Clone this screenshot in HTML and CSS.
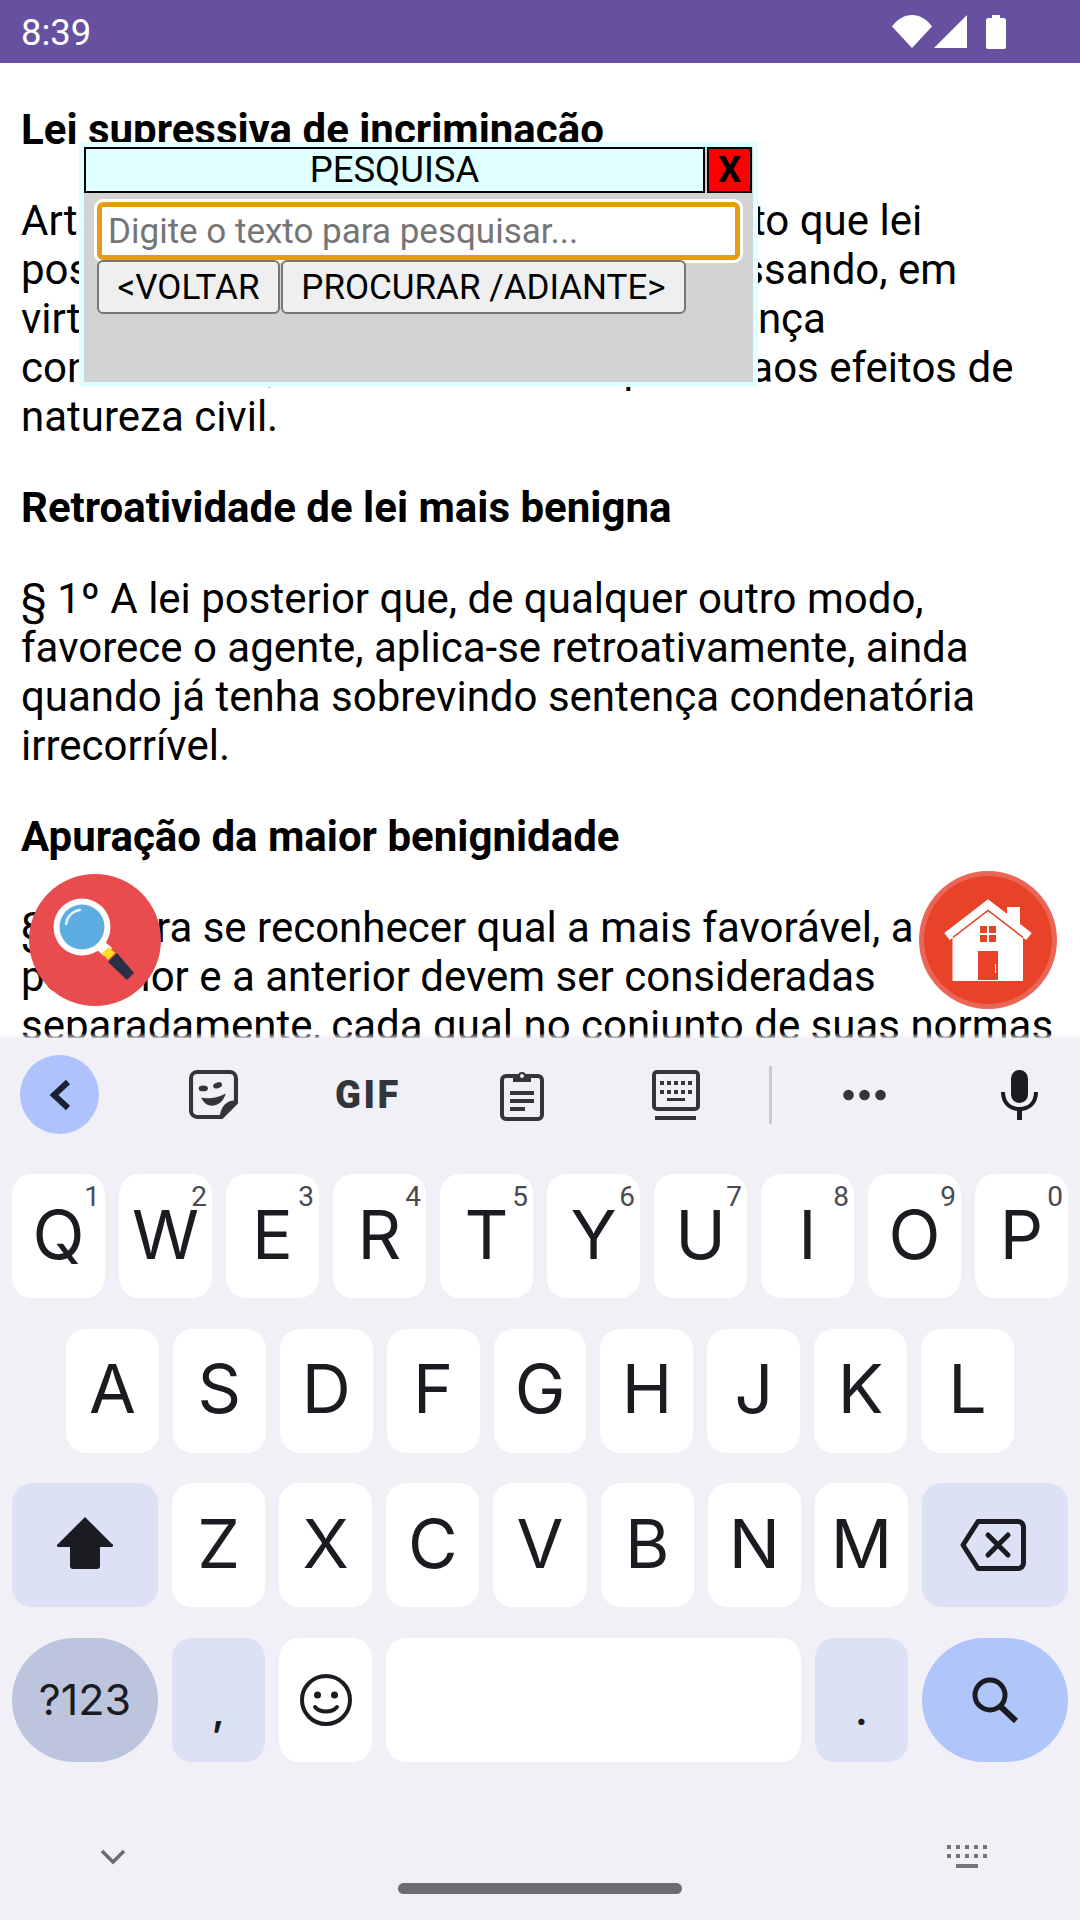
FILE: index.html
```html
<!DOCTYPE html>
<html lang="pt-BR">
<head>
<meta charset="utf-8">
<title>Código Penal</title>
<link rel="stylesheet" href="styles.css">
</head>
<body>
<div class="screen">
  <header class="status">
    <span class="clock">8:39</span>
    <div class="status-icons">
      <svg class="ic-wifi" viewBox="0 0 40 33"><path d="M0 11.5C5 4.500 12 0 20 0s15 4.500 20 11.500L20 33z"/></svg>
      <svg class="ic-signal" viewBox="0 0 33 33"><path d="M33 0v33H0z"/></svg>
      <svg class="ic-battery" viewBox="0 0 20 34"><path d="M6 0h8v3h3.500A2.500 2.500 0 0 1 20 5.500V32a2 2 0 0 1-2 2H2a2 2 0 0 1-2-2V5.500A2.500 2.500 0 0 1 2.500 3H6z"/></svg>
    </div>
  </header>

  <main class="article">
    <h2>Lei supressiva de incriminação</h2>
    <p>Art. 2º Ninguém pode ser punido por fato que lei posterior deixa de considerar crime, cessando, em virtude dela a execução da citada sentença condenatória, mas não mesmo quanto aos efeitos de natureza civil.</p>
    <h2>Retroatividade de lei mais benigna</h2>
    <p>§ 1º A lei posterior que, de qualquer outro modo, favorece o agente, aplica-se retroativamente, ainda quando já tenha sobrevindo sentença condenatória irrecorrível.</p>
    <h2>Apuração da maior benignidade</h2>
    <p>§ 2° Para se reconhecer qual a mais favorável, a lei posterior e a anterior devem ser consideradas separadamente, cada qual no conjunto de suas normas</p>
  </main>

  <section class="finder">
    <div class="finder-head">
      <div class="finder-title">PESQUISA</div>
      <div class="finder-close">X</div>
    </div>
    <input class="finder-input" type="text" placeholder="Digite o texto para pesquisar...">
    <div class="finder-actions">
      <button class="finder-btn" type="button">&lt;VOLTAR</button>
      <button class="finder-btn wide" type="button">PROCURAR /ADIANTE&gt;</button>
    </div>
  </section>

  <!-- Floating magnifier shortcut -->
  <svg class="fab fab-search" viewBox="0 0 132 132">
    <circle cx="66" cy="66" r="66" fill="#e84c4f"/>
    <path d="M68 76l8-8 7 6-8 8z" fill="#fff"/>
    <path d="M80 73l6 6-7 7-6-7z" fill="#ffdd22"/>
    <path d="M88 79l17 20-7 7-19-18z" fill="#2b3047"/>
    <circle cx="53" cy="53" r="28.500" fill="#fff"/>
    <circle cx="53" cy="53" r="22.500" fill="#5dade2"/>
    <path d="M37 50c1-7 6-13 14-14" fill="none" stroke="#fff" stroke-width="2.500" stroke-linecap="round" opacity=".85"/>
  </svg>

  <!-- Floating home shortcut -->
  <svg class="fab fab-home" viewBox="0 0 138 138">
    <circle cx="69" cy="69" r="69" fill="#eb6656"/>
    <circle cx="69" cy="69" r="64" fill="#e84228"/>
    <path d="M88 36h13v22H88z" fill="#fff"/>
    <path d="M28 65.500L69 34l41 31.500" fill="none" stroke="#fff" stroke-width="9"/>
    <path d="M33.500 110V66L69 40l35 26v44z" fill="#fff"/>
    <path d="M34 66.400L69 39.500l35 26.900" fill="none" stroke="#e84228" stroke-width="1.500"/>
    <path d="M61 55h7v7h-7zM70 55h7v7h-7zM61 64h7v7h-7zM70 64h7v7h-7z" fill="#e84228"/>
    <path d="M59 80h20v29H59z" fill="#e84228"/>
    <path d="M76 93h1v9h-1z" fill="#fff"/>
  </svg>

  <footer class="keyboard">
    <div class="toolbar">
      <div class="tb-back">
        <svg class="ic-back" viewBox="0 0 24 32"><path d="M20 3L6 16l14 13" fill="none" stroke="#1b1f33" stroke-width="6"/></svg>
      </div>
      <svg class="ic-sticker" viewBox="0 0 48 48">
        <path d="M8 2h32a6 6 0 0 1 6 6v24L32 46H8a6 6 0 0 1-6-6V8a6 6 0 0 1 6-6z" fill="none" stroke="#34353a" stroke-width="4"/>
        <path d="M46 30c-8-1-15 5-16 16z" fill="#34353a"/>
        <ellipse cx="14" cy="18" rx="4.500" ry="2.800" fill="#34353a"/>
        <ellipse cx="28" cy="15" rx="4.500" ry="2.800" fill="#34353a" transform="rotate(-20 28 15)"/>
        <path d="M12 27c8 2 17 0 24-4-2 8-8 12-14 12-4 0-8-3-10-8z" fill="#34353a"/>
      </svg>
      <span class="gif">GIF</span>
      <svg class="ic-clip" viewBox="0 0 44 52">
        <path d="M6 7h32a4 4 0 0 1 4 4v35a4 4 0 0 1-4 4H6a4 4 0 0 1-4-4V11a4 4 0 0 1 4-4z" fill="none" stroke="#34353a" stroke-width="4"/>
        <path d="M13 13V7h5a4 4 0 0 1 8 0h5v6z" fill="#34353a"/>
        <circle cx="22" cy="7" r="2" fill="#f0f0f6"/>
        <path d="M10 22h24v4H10zM10 30h24v4H10zM10 38h15v4H10z" fill="#34353a"/>
      </svg>
      <svg class="ic-kbd" viewBox="0 0 48 50">
        <rect x="2" y="2" width="44" height="37" rx="3" fill="none" stroke="#34353a" stroke-width="4"/>
        <path d="M8 11h4v4H8zM15 11h4v4h-4zM22 11h4v4h-4zM29 11h4v4h-4zM36 11h4v4h-4zM8 20h4v4H8zM15 20h4v4h-4zM22 20h4v4h-4zM29 20h4v4h-4zM36 20h4v4h-4zM15 28h18v3H15zM3 46h41v4H3z" fill="#34353a"/>
      </svg>
      <div class="tb-sep"></div>
      <svg class="ic-more" viewBox="0 0 43 12"><circle cx="5.500" cy="6" r="5.300"/><circle cx="21.500" cy="6" r="5.300"/><circle cx="37.500" cy="6" r="5.300"/></svg>
      <svg class="ic-mic" viewBox="0 0 37 50">
        <rect x="10" y="0" width="17" height="33" rx="8.500" fill="#1b1c21"/>
        <path d="M2 22c0 11 7 17 16.500 17S35 33 35 22" fill="none" stroke="#1b1c21" stroke-width="4"/>
        <path d="M16 38h5v12h-5z" fill="#1b1c21"/>
      </svg>
    </div>

    <div class="rows">
      <div class="row">
        <div class="key">Q<sup class="hint">1</sup></div>
        <div class="key">W<sup class="hint">2</sup></div>
        <div class="key">E<sup class="hint">3</sup></div>
        <div class="key">R<sup class="hint">4</sup></div>
        <div class="key">T<sup class="hint">5</sup></div>
        <div class="key">Y<sup class="hint">6</sup></div>
        <div class="key">U<sup class="hint">7</sup></div>
        <div class="key">I<sup class="hint">8</sup></div>
        <div class="key">O<sup class="hint">9</sup></div>
        <div class="key">P<sup class="hint">0</sup></div>
      </div>
      <div class="row row-home">
        <div class="key">A</div><div class="key">S</div><div class="key">D</div><div class="key">F</div><div class="key">G</div><div class="key">H</div><div class="key">J</div><div class="key">K</div><div class="key">L</div>
      </div>
      <div class="row">
        <div class="key mod">
          <svg class="ic-shift" viewBox="0 0 56 52"><path d="M28 0l27 27a1.500 1.500 0 0 1-1 3H43v19a3 3 0 0 1-3 3H16a3 3 0 0 1-3-3V30H2a1.500 1.500 0 0 1-1-3z"/></svg>
        </div>
        <div class="key">Z</div><div class="key">X</div><div class="key">C</div><div class="key">V</div><div class="key">B</div><div class="key">N</div><div class="key">M</div>
        <div class="key mod">
          <svg class="ic-del" viewBox="0 0 66 52">
            <path d="M18 2.500h40a5.500 5.500 0 0 1 5.500 5.500v36a5.500 5.500 0 0 1-5.500 5.500H18L3 26z" fill="none" stroke="#1b1c21" stroke-width="5" stroke-linejoin="round"/>
            <path d="M28 16l20 20M48 16L28 36" fill="none" stroke="#1b1c21" stroke-width="5" stroke-linecap="round"/>
          </svg>
        </div>
      </div>
      <div class="row row-last">
        <div class="key mod round alt">?123</div>
        <div class="key narrow punct"><span>,</span></div>
        <div class="key narrow">
          <svg class="ic-emoji" viewBox="0 0 52 52">
            <circle cx="26" cy="26" r="24" fill="none" stroke="#1b1c21" stroke-width="4"/>
            <circle cx="17.500" cy="21" r="3.500" fill="#1b1c21"/><circle cx="34.500" cy="21" r="3.500" fill="#1b1c21"/>
            <path d="M15 33c5 6 17 6 22 0" fill="none" stroke="#1b1c21" stroke-width="4" stroke-linecap="round"/>
          </svg>
        </div>
        <div class="key space"></div>
        <div class="key narrow punct"><span>.</span></div>
        <div class="key mod round action">
          <svg class="ic-search" viewBox="0 0 46 46"><circle cx="18" cy="18" r="15" fill="none" stroke="#1b1c21" stroke-width="5"/><path d="M28 29l16 15" fill="none" stroke="#1b1c21" stroke-width="6"/></svg>
        </div>
      </div>
    </div>

    <nav class="nav">
      <svg class="ic-hide" viewBox="0 0 26 16"><path d="M2 2l11 11L24 2" fill="none" stroke="#6b6b70" stroke-width="3.500"/></svg>
      <div class="pill"></div>
      <svg class="ic-switch" viewBox="0 0 41 23"><path d="M0 0h4v4H0zM9 0h4v4H9zM18 0h4v4h-4zM27 0h4v4h-4zM36 0h4v4h-4zM0 9h4v4H0zM9 9h4v4H9zM18 9h4v4h-4zM27 9h4v4h-4zM36 9h4v4h-4zM9 19h22v4H9z" fill="#74747a"/></svg>
    </nav>
  </footer>
</div>
</body>
</html>
```
FILE: styles.css
```css
* { box-sizing: border-box; }

html, body { margin: 0; padding: 0; }

body {
  width: 1080px;
  height: 1920px;
  overflow: hidden;
  font-family: Roboto, "Liberation Sans", sans-serif;
  background: #fff;
}

.screen {
  position: relative;
  width: 1080px;
  height: 1920px;
  display: flex;
  flex-direction: column;
  overflow: hidden;
}

/* Status bar */
.status {
  height: 63px;
  flex: none;
  display: flex;
  align-items: center;
  justify-content: space-between;
  padding: 2px 74px 0 21px;
  background: #67509f;
  color: #fff;
}

.clock { font-size: 36.500px; line-height: 61px; }

.status-icons { display: flex; align-items: flex-start; height: 34px; margin-top: -2px; fill: #fff; }
.ic-wifi { width: 40px; height: 33px; margin-right: 2px; }
.ic-signal { width: 33px; height: 33px; margin-right: 19px; }
.ic-battery { width: 20px; height: 34px; }

/* Article */
.article {
  flex: 1;
  min-height: 0;
  overflow: hidden;
  padding: 42px 21px 0;
  color: #000;
  font-size: 42px;
  line-height: 49px;
}

.article h2 { margin: 0 0 42px; font-size: 42px; font-weight: 700; }
.article p { margin: 0 0 42px; }

/* Search popup */
.finder {
  position: absolute;
  left: 79px;
  top: 142px;
  width: 679px;
  height: 245px;
  border: 5px solid #e0ffff;
  background: #d3d3d3;
}

.finder-head { display: flex; gap: 2px; height: 46px; }

.finder-title {
  width: 621px;
  border: 2px solid #000;
  background: #e0ffff;
  color: #000;
  font-size: 36.500px;
  line-height: 42px;
  text-align: center;
}

.finder-close {
  width: 45px;
  border: 2px solid #000;
  background: #f00;
  color: #000;
  font-size: 36.500px;
  font-weight: 700;
  line-height: 42px;
  text-align: center;
}

.finder-input {
  display: block;
  width: 643px;
  height: 58px;
  margin: 9px 0 0 13px;
  padding: 0 6px;
  border: 5px solid #e59b17;
  border-radius: 6px;
  outline: 3px solid #fff;
  background: #fff;
  font-family: inherit;
  font-size: 35px;
}

.finder-input::placeholder { color: #757575; opacity: 1; }

.finder-actions { position: relative; display: flex; padding-left: 13px; }

.finder-btn {
  width: 183px;
  height: 54px;
  padding: 0;
  border: 2px solid #767676;
  border-radius: 6px;
  background: #efefef;
  color: #000;
  font-family: inherit;
  font-size: 35px;
}

.finder-btn.wide { width: 405px; margin-left: 1px; }

/* Floating shortcuts */
.fab { position: absolute; display: block; }
.fab-search { left: 29px; top: 874px; width: 132px; height: 132px; }
.fab-home { left: 919px; top: 871px; width: 138px; height: 138px; }

/* Keyboard */
.keyboard {
  position: relative;
  flex: none;
  height: 882px;
  display: flex;
  flex-direction: column;
  background: #f0f0f6;
  color: #1b1c21;
}

/* Soft fade where the keyboard meets the page */
.keyboard::before {
  content: "";
  position: absolute;
  left: 0;
  right: 0;
  top: -5px;
  height: 5px;
  background: linear-gradient(rgba(240, 240, 246, 0), rgba(240, 240, 246, .8));
}

.toolbar {
  flex: none;
  height: 136px;
  display: flex;
  align-items: center;
  padding: 0 0 23px 20px;
}

.tb-back {
  flex: none;
  width: 79px;
  height: 79px;
  border-radius: 50%;
  background: #aec2fb;
  display: flex;
  align-items: center;
  justify-content: center;
}

.ic-back { width: 24px; height: 32px; }
.ic-sticker { flex: none; width: 49px; height: 49px; margin-left: 90px; }
.gif { flex: none; width: 64px; margin-left: 97px; font-size: 38px; font-weight: 900; letter-spacing: 2.500px; color: #34353a; line-height: 1; }
.ic-clip { flex: none; width: 44px; height: 52px; margin-left: 101px; }
.ic-kbd { flex: none; width: 48px; height: 50px; margin-left: 108px; }
.tb-sep { flex: none; width: 3px; height: 58px; margin-left: 69px; background: #c9cad1; }
.ic-more { flex: none; width: 43px; height: 12px; margin-left: 71px; fill: #34353a; }
.ic-mic { flex: none; width: 37px; height: 50px; margin-left: 115px; }

.rows { display: flex; flex-direction: column; gap: 30.500px; padding: 0 12px; flex: none; }
.row { display: flex; gap: 14px; height: 124px; }
.row-home { padding: 0 54px; }

.key {
  position: relative;
  flex: 1;
  min-width: 0;
  display: flex;
  align-items: center;
  justify-content: center;
  padding-bottom: 5px;
  border-radius: 20px;
  background: #fff;
  font-family: Inter, Roboto, sans-serif;
  font-size: 68px;
  line-height: 1;
}

.hint {
  position: absolute;
  top: 9px;
  right: 5px;
  font-family: Roboto, sans-serif;
  font-size: 28px;
  line-height: 1;
  color: #4a4a4f;
  vertical-align: baseline;
}

.key.mod { flex: none; width: 146px; padding-bottom: 0; background: #dce1f6; }
.key.round { border-radius: 62px; }
.key.alt { background: #bcc5dd; font-size: 43px; }
.key.action { background: #b0c5f9; }
.key.narrow { flex: none; width: 93px; padding-bottom: 0; }
.key.space { flex: 1; }
.key.punct { background: #dce1f6; font-size: 40px; font-weight: 600; }
.key.punct span { transform: translateY(11px); }

.ic-shift { width: 56px; height: 52px; margin-bottom: 4px; fill: #1b1c21; }
.ic-del { width: 66px; height: 52px; margin-right: 4px; }
.ic-emoji { width: 52px; height: 52px; }
.ic-search { width: 46px; height: 46px; }

/* Navigation strip under the keys */
.nav {
  flex: 1;
  display: flex;
  align-items: flex-end;
  padding: 0 0 26px 100px;
}

.ic-hide { width: 26px; height: 16px; margin: 0 272px 29px 0; }
.pill { width: 284px; height: 11px; border-radius: 6px; background: #6b6b70; margin-right: 265px; }
.ic-switch { width: 41px; height: 23px; margin-bottom: 26px; }
```
